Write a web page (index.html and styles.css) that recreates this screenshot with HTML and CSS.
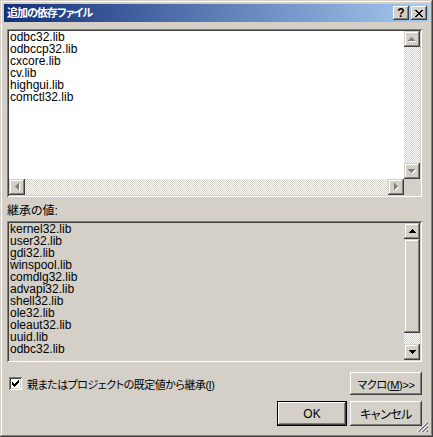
FILE: index.html
```html
<!DOCTYPE html>
<html lang="ja">
  <head>
    <meta charset="UTF-8" />
    <title>追加の依存ファイル</title>
    <link rel="stylesheet" href="styles.css">
  </head>
  <body>
    <div class="window">
      <!-- タイトルバー -->
      <div class="titlebar">
        <span class="title">追加の依存ファイル</span>
        <div class="cap-btns">
          <button class="cap-btn help">?</button>
          <button class="cap-btn">
            <svg width="8" height="7" viewBox="0 0 8 7" shape-rendering="crispEdges">
              <path d="M0 0h2v1h-2z M6 0h2v1h-2z M1 1h2v1h-2z M5 1h2v1h-2z M2 2h4v1h-4z M3 3h2v1h-2z M2 4h4v1h-4z M1 5h2v1h-2z M5 5h2v1h-2z M0 6h2v1h-2z M6 6h2v1h-2z" fill="#000"/>
            </svg>
          </button>
        </div>
      </div>

      <div class="client">
        <!-- 1. 編集できるリスト -->
        <div class="listbox edit">
          <div class="lines">
            <div>odbc32.lib</div>
            <div>odbccp32.lib</div>
            <div>cxcore.lib</div>
            <div>cv.lib</div>
            <div>highgui.lib</div>
            <div>comctl32.lib</div>
          </div>
          <div class="vscroll">
            <div class="sb-btn">
              <svg width="8" height="5" viewBox="0 0 8 5" shape-rendering="crispEdges">
                <path d="M4 1h1v1h-1z M3 2h3v1h-3z M2 3h5v1h-5z M1 4h7v1h-7z" fill="#fff"/>
                <path d="M3 0h1v1h-1z M2 1h3v1h-3z M1 2h5v1h-5z M0 3h7v1h-7z" fill="#808080"/>
              </svg>
            </div>
            <div class="track"></div>
            <div class="sb-btn">
              <svg width="8" height="5" viewBox="0 0 8 5" shape-rendering="crispEdges">
                <path d="M1 1h7v1h-7z M2 2h5v1h-5z M3 3h3v1h-3z M4 4h1v1h-1z" fill="#fff"/>
                <path d="M0 0h7v1h-7z M1 1h5v1h-5z M2 2h3v1h-3z M3 3h1v1h-1z" fill="#808080"/>
              </svg>
            </div>
          </div>
          <div class="hscroll">
            <div class="sb-btn">
              <svg width="5" height="8" viewBox="0 0 5 8" shape-rendering="crispEdges">
                <path d="M1 4h1v1h-1z M2 3h1v3h-1z M3 2h1v5h-1z M4 1h1v7h-1z" fill="#fff"/>
                <path d="M0 3h1v1h-1z M1 2h1v3h-1z M2 1h1v5h-1z M3 0h1v7h-1z" fill="#808080"/>
              </svg>
            </div>
            <div class="track"></div>
            <div class="sb-btn">
              <svg width="5" height="8" viewBox="0 0 5 8" shape-rendering="crispEdges">
                <path d="M1 1h1v7h-1z M2 2h1v5h-1z M3 3h1v3h-1z M4 4h1v1h-1z" fill="#fff"/>
                <path d="M0 0h1v7h-1z M1 1h1v5h-1z M2 2h1v3h-1z M3 3h1v1h-1z" fill="#808080"/>
              </svg>
            </div>
          </div>
          <div class="corner"></div>
        </div>

        <!-- 2. 継承された値 -->
        <div class="label">継承の値:</div>
        <div class="listbox inherited">
          <div class="lines">
            <div>kernel32.lib</div>
            <div>user32.lib</div>
            <div>gdi32.lib</div>
            <div>winspool.lib</div>
            <div>comdlg32.lib</div>
            <div>advapi32.lib</div>
            <div>shell32.lib</div>
            <div>ole32.lib</div>
            <div>oleaut32.lib</div>
            <div>uuid.lib</div>
            <div>odbc32.lib</div>
          </div>
          <div class="vscroll">
            <div class="sb-btn">
              <svg width="7" height="4" viewBox="0 0 7 4" shape-rendering="crispEdges">
                <path d="M3 0h1v1h-1z M2 1h3v1h-3z M1 2h5v1h-5z M0 3h7v1h-7z" fill="#000"/>
              </svg>
            </div>
            <div class="thumb"></div>
            <div class="track"></div>
            <div class="sb-btn">
              <svg width="7" height="4" viewBox="0 0 7 4" shape-rendering="crispEdges">
                <path d="M0 0h7v1h-7z M1 1h5v1h-5z M2 2h3v1h-3z M3 3h1v1h-1z" fill="#000"/>
              </svg>
            </div>
          </div>
        </div>

        <div class="opt-row">
          <label class="check">
            <span class="box">
              <svg width="7" height="7" viewBox="0 0 7 7" shape-rendering="crispEdges">
                <path d="M0 2h1v3h-1z M1 3h1v3h-1z M2 4h1v3h-1z M3 3h1v3h-1z M4 2h1v3h-1z M5 1h1v3h-1z M6 0h1v3h-1z" fill="#000"/>
              </svg>
            </span>
            <span class="check-text">親またはプロジェクトの既定値から継承(<u>I</u>)</span>
          </label>
          <button class="btn macro">マクロ(<u>M</u>)&gt;&gt;</button>
        </div>

        <div class="btn-row">
          <button class="btn default">OK</button>
          <button class="btn cancel">キャンセル</button>
        </div>
      </div>

      <!-- サイズグリップ -->
      <svg class="grip" width="12" height="12" viewBox="0 0 12 12" shape-rendering="crispEdges">
        <path d="M11 0L0 11 M11 4L4 11 M11 8L8 11" stroke="#fff" stroke-width="1"/>
        <path d="M11 1L1 11 M11 2L2 11 M11 5L5 11 M11 6L6 11 M11 9L9 11 M11 10L10 11" stroke="#808080" stroke-width="1"/>
      </svg>
    </div>
  </body>
</html>
```

FILE: styles.css
```css
* {
  margin: 0;
  padding: 0;
  box-sizing: border-box;
}

body {
  width: 433px;
  height: 437px;
  overflow: hidden;
  font-family: "Liberation Sans", "Noto Sans CJK JP", sans-serif;
  font-size: 12px;
  font-feature-settings: "palt";
  color: #000;
}

button {
  font: inherit;
  color: inherit;
  border: none;
  background: #d4d0c8;
}

/* ウィンドウ枠 */
.window {
  position: relative;
  width: 433px;
  height: 437px;
  padding: 4px;
  background: #d4d0c8;
  box-shadow: inset -1px -1px #404040, inset 1px 1px #d4d0c8,
    inset -2px -2px #808080, inset 2px 2px #fff;
  display: flex;
  flex-direction: column;
}

.titlebar {
  height: 18px;
  padding: 0 2px 0 3px;
  background: linear-gradient(to right, #14307a, #a6caf0);
  display: flex;
  align-items: center;
  justify-content: space-between;
}

.title {
  color: #fff;
  font-weight: bold;
  font-size: 11px;
  letter-spacing: -1px;
  line-height: 18px;
}

.cap-btns {
  display: flex;
  gap: 2px;
}

.cap-btn {
  width: 16px;
  height: 14px;
  display: flex;
  align-items: center;
  justify-content: center;
  box-shadow: inset -1px -1px #404040, inset 1px 1px #fff,
    inset -2px -2px #808080, inset 2px 2px #d4d0c8;
}

.cap-btn.help {
  font-weight: bold;
  font-size: 12px;
  line-height: 14px;
  padding-bottom: 1px;
}

/* クライアント領域 */
.client {
  flex: 1;
  padding: 7px 7px 0 3px;
  display: flex;
  flex-direction: column;
}

.listbox {
  display: grid;
  grid-template-columns: 1fr 16px;
  padding: 2px;
  box-shadow: inset 1px 1px #808080, inset -1px -1px #fff,
    inset 2px 2px #404040, inset -2px -2px #d4d0c8;
}

.listbox.edit {
  height: 168px;
  grid-template-rows: 1fr 16px;
  background: #fff;
}

.listbox.inherited {
  height: 141px;
  margin-top: 3px;
  grid-template-rows: 1fr;
  background: #d4d0c8;
}

.lines {
  padding-left: 1px;
  line-height: 12px;
  overflow: hidden;
}

.vscroll {
  display: flex;
  flex-direction: column;
}

.hscroll {
  display: flex;
}

.sb-btn {
  flex: none;
  width: 16px;
  height: 16px;
  display: flex;
  align-items: center;
  justify-content: center;
  background: #d4d0c8;
  box-shadow: inset -1px -1px #404040, inset 1px 1px #d4d0c8,
    inset -2px -2px #808080, inset 2px 2px #fff;
}

.track {
  flex: 1;
  background: repeating-conic-gradient(#fff 0 25%, #d4d0c8 0 50%) 0 0 / 2px 2px;
}

.thumb {
  flex: none;
  height: 94px;
  background: #d4d0c8;
  box-shadow: inset -1px -1px #404040, inset 1px 1px #d4d0c8,
    inset -2px -2px #808080, inset 2px 2px #fff;
}

.corner {
  background: #d4d0c8;
}

.label {
  margin-top: 7px;
  line-height: 14px;
}

/* チェックボックスとボタン */
.opt-row {
  margin-top: 10px;
  height: 23px;
  display: flex;
  align-items: center;
  justify-content: space-between;
}

.check {
  display: flex;
  align-items: center;
  gap: 5px;
  margin-left: 2px;
}

.check-text {
  font-size: 11px;
  letter-spacing: -0.5px;
}

.check .box {
  width: 13px;
  height: 13px;
  background: #fff;
  display: flex;
  align-items: center;
  justify-content: center;
  box-shadow: inset 1px 1px #808080, inset -1px -1px #fff,
    inset 2px 2px #404040, inset -2px -2px #d4d0c8;
}

.btn {
  height: 23px;
  width: 72px;
  box-shadow: inset -1px -1px #404040, inset 1px 1px #fff,
    inset -2px -2px #808080, inset 2px 2px #d4d0c8;
}

.btn.macro {
  font-size: 11px;
  letter-spacing: -0.3px;
}

.btn.cancel {
  letter-spacing: -0.5px;
}

.btn-row {
  margin-top: 6px;
  display: flex;
  justify-content: flex-end;
  gap: 3px;
}

.btn-row .btn {
  height: 25px;
}

.btn.default {
  width: 70px;
  border: 1px solid #000;
}

.grip {
  position: absolute;
  right: 4px;
  bottom: 4px;
}
```
